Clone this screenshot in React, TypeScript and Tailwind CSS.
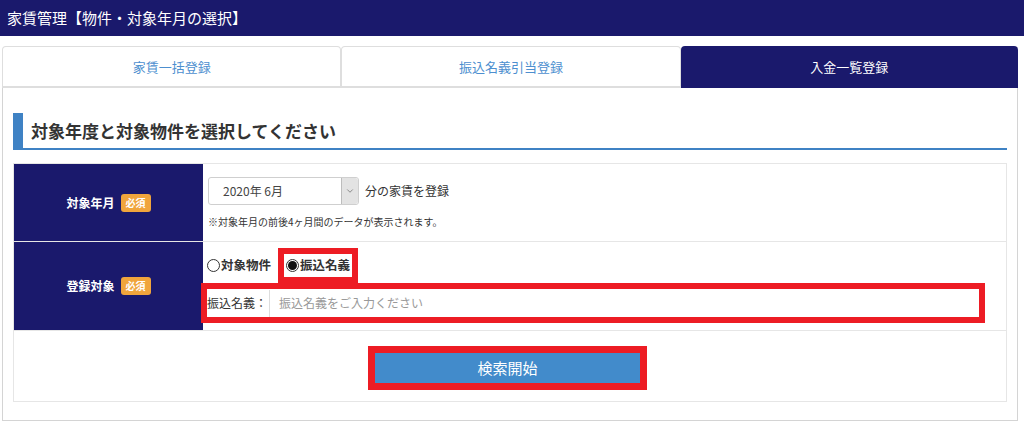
import { ChevronDown } from "lucide-react";

const FONT = { fontFamily: '"Noto Sans CJK JP", "Noto Sans", sans-serif' };

function Badge() {
  return (
    <span className="ml-[6px] inline-flex h-[18px] items-center rounded-[3px] bg-[#f0a53c] px-[5px] text-[10px] font-bold leading-none text-white">
      必須
    </span>
  );
}

function Radio({ checked }: { checked?: boolean }) {
  return (
    <span className="mr-[1px] inline-flex h-[13px] w-[13px] items-center justify-center rounded-full border border-[#333] bg-white">
      {checked && <span className="h-[9px] w-[9px] rounded-full bg-[#111]" />}
    </span>
  );
}

export default function App() {
  const tabs = ["家賃一括登録", "振込名義引当登録", "入金一覧登録"];
  return (
    <div className="h-[423px] w-[1024px] overflow-hidden bg-white text-[#333]" style={FONT}>
      <div className="flex h-[36px] items-center bg-[#1a196c] pl-[7px] text-[15px] text-white">
        家賃管理【物件・対象年月の選択】
      </div>

      <div className="ml-[2px] mr-[6px] mt-[10px] flex">
        {tabs.map((t, i) =>
          i === 2 ? (
            <div
              key={t}
              className="flex h-[42px] flex-1 items-center justify-center rounded-t-[4px] bg-[#1a196c] text-[13px] text-white"
            >
              {t}
            </div>
          ) : (
            <div
              key={t}
              className="flex h-[42px] flex-1 items-center justify-center rounded-t-[4px] border border-b-2 border-[#dedede] bg-white text-[13px] text-[#4d8fcf]"
            >
              {t}
            </div>
          )
        )}
      </div>

      <div className="ml-[2px] mr-[6px] h-[333px] border-x border-b border-[#d4d4d4] px-[10px] pt-[25px]">
        <div className="flex h-[37px] border-b-2 border-[#3f82c4]">
          <div className="h-[35px] w-[10px] bg-[#3f82c4]" />
          <div className="flex items-center pl-[8px] text-[17px] font-bold text-[#333]">
            対象年度と対象物件を選択してください
          </div>
        </div>

        <div className="mt-[13px] border border-[#e6e6e6]">
          <div className="flex h-[78px] border-b border-[#e6e6e6]">
            <div className="flex w-[189px] items-center justify-center bg-[#1a196c] text-[12px] font-bold text-white">
              対象年月
              <Badge />
            </div>
            <div className="flex flex-col pl-[5px] pt-[13px]">
              <div className="flex items-center">
                <div className="flex h-[28px] w-[151px] items-stretch rounded-[3px] border border-[#cfcfcf] bg-white">
                  <div className="flex flex-1 items-center pl-[14px] text-[12px] text-[#444]">2020年 6月</div>
                  <div className="flex w-[17px] items-center justify-center rounded-r-[3px] border-l border-[#bdbdbd] bg-[#e3e3e3]">
                    <ChevronDown size={10} strokeWidth={1.5} className="text-[#555]" />
                  </div>
                </div>
                <span className="ml-[6px] text-[12px] text-[#333]">分の家賃を登録</span>
              </div>
              <div className="mt-[9px] text-[10px] text-[#333]">
                ※対象年月の前後4ヶ月間のデータが表示されます。
              </div>
            </div>
          </div>

          <div className="flex h-[89px] border-b border-[#e6e6e6]">
            <div className="flex w-[189px] items-center justify-center bg-[#1a196c] text-[12px] font-bold text-white">
              登録対象
              <Badge />
            </div>
            <div className="flex flex-1 flex-col pt-[6px]">
              <div className="flex h-[35px] items-center pl-[4px] text-[12.5px] font-bold">
                <label className="flex items-center">
                  <Radio />
                  対象物件
                </label>
                <div className="ml-[7px] flex h-[35px] w-[80px] items-center border-[6px] border-[#ed1c24] bg-white pl-[2px]">
                  <Radio checked />
                  振込名義
                </div>
              </div>
              <div className="-ml-[2px] flex h-[40px] w-[784px] items-center border-[6px] border-[#ed1c24] bg-white pr-[6px]">
                <span className="w-[62px] shrink-0 text-[12px] text-[#333]">振込名義：</span>
                <div className="flex h-[27px] flex-1 items-center border-l border-[#ddd] pl-[9px] text-[12px] text-[#999]">
                  振込名義をご入力ください
                </div>
              </div>
            </div>
          </div>

          <div className="flex h-[70px] justify-center pr-[5px] pt-[15px]">
            <div className="h-[44px] w-[279px] border-[7px] border-[#ed1c24]">
              <div className="flex h-full items-center justify-center bg-[#428bcb] text-[15px] text-white">
                検索開始
              </div>
            </div>
          </div>
        </div>
      </div>
    </div>
  );
}
